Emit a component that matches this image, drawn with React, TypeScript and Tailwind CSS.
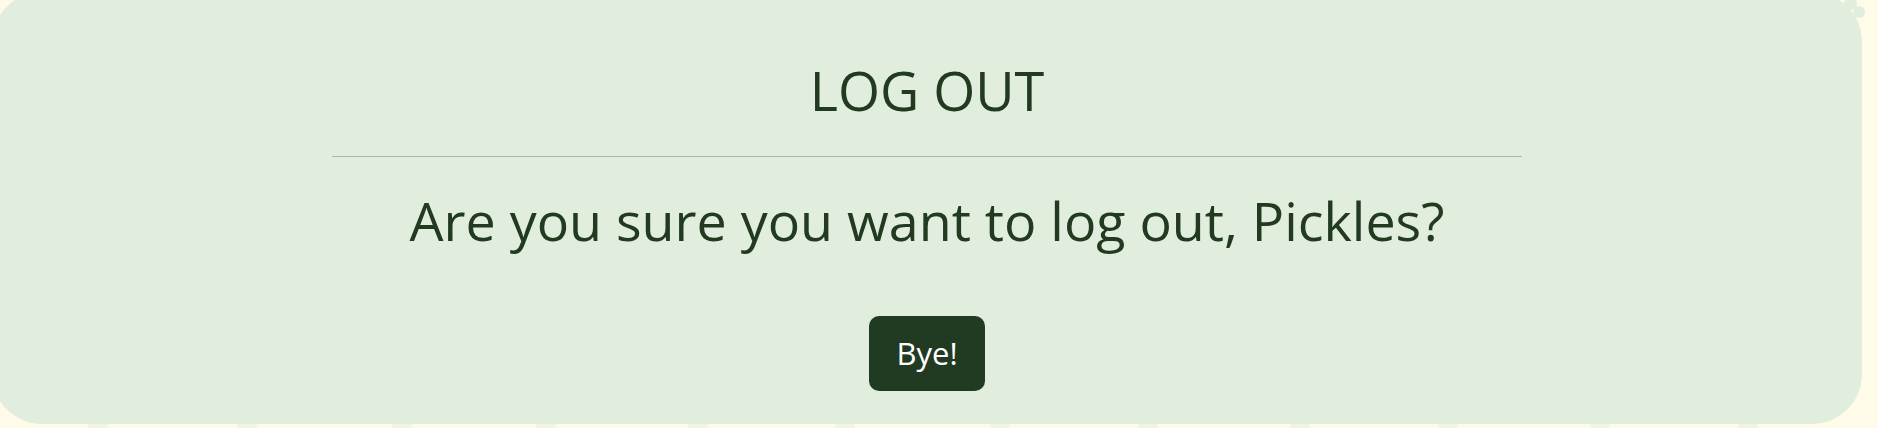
import React from "react";

export default function App() {
  const xs = [98, 247, 402, 546, 698, 845, 1000, 1148, 1300, 1448, 1600, 1748];
  return (
    <div className="relative w-[1878px] h-[428px] overflow-hidden bg-[#fefce8] font-['Open_Sans',sans-serif]">
      {xs.map((x, i) => (
        <div
          key={i}
          className="absolute top-[421px] h-[12px] w-[20px] rounded-full bg-[#f2f4e0]"
          style={{ left: x - 10 }}
        />
      ))}
      <div className="absolute left-[1844px] top-[-3px] h-[13px] w-[13px] rounded-full bg-[#e2eedd]" />
      <div className="absolute left-[1853px] top-[6px] h-[12px] w-[12px] rounded-full bg-[#e2eedd]" />
      <div className="relative ml-[-8px] mt-[-8px] flex h-[432px] w-[1870px] flex-col items-center rounded-[50px] bg-[#e2eedd] pt-[71px] text-[#213a20]">
        <h1 className="text-[54px] leading-none font-normal">LOG OUT</h1>
        <div className="mt-[39px] h-px w-[1190px] bg-[#a9b9a3]" />
        <p className="mt-[37px] text-[53.8px] leading-none">
          Are you sure you want to log out, Pickles?
        </p>
        <button className="mt-[68px] flex h-[75px] w-[116px] items-center justify-center rounded-[10px] bg-[#213a22] text-[31px] leading-none text-white">
          Bye!
        </button>
      </div>
    </div>
  );
}
